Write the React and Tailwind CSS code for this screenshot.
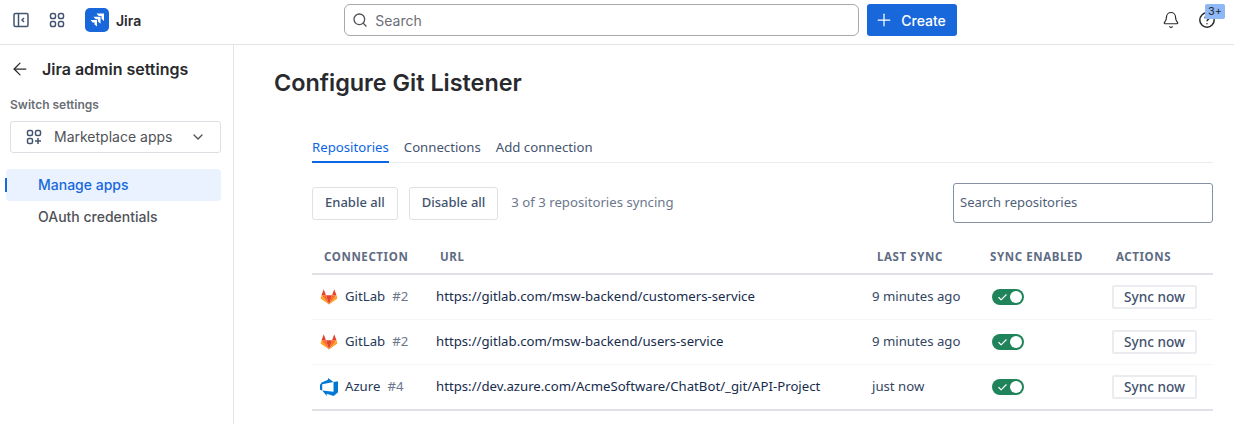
import { ArrowLeft, Bell, ChevronDown, Check, Plus, Search } from 'lucide-react';

const repos = [
  { kind: 'gitlab', name: 'GitLab', num: '#2', url: 'https://gitlab.com/msw-backend/customers-service', last: '9 minutes ago' },
  { kind: 'gitlab', name: 'GitLab', num: '#2', url: 'https://gitlab.com/msw-backend/users-service', last: '9 minutes ago' },
  { kind: 'azure', name: 'Azure', num: '#4', url: 'https://dev.azure.com/AcmeSoftware/ChatBot/_git/API-Project', last: 'just now' },
];

const GitLabIcon = () => (
  <svg width="18" height="18" viewBox="0 0 24 24">
    <polygon fill="#E24329" points="8,9.500 5,1.500 2,9.500" />
    <polygon fill="#E24329" points="16,9.500 19,1.500 22,9.500" />
    <polygon fill="#FC6D26" points="12,22 8,9.500 2,9.500" />
    <polygon fill="#FC6D26" points="12,22 16,9.500 22,9.500" />
    <polygon fill="#E24329" points="12,22 8,9.500 16,9.500" />
    <polygon fill="#FCA326" points="2,9.500 .8,14 12,22" />
    <polygon fill="#FCA326" points="22,9.500 23.200,14 12,22" />
  </svg>
);

const AzureIcon = () => (
  <svg width="18" height="18" viewBox="0 0 24 24">
    <path fill="#0078D4" d="M0 8.877 2.247 5.910l8.405-3.416V.022l7.370 5.393L2.966 8.338v8.225L0 15.707zm24-4.450v14.651l-5.753 4.900-9.303-3.057v3.056l-5.978-7.416 15.057 1.798V5.415z" />
  </svg>
);

const SidebarToggle = () => (
  <svg width="16" height="16" viewBox="0 0 16 16" fill="none" stroke="#44546f" strokeWidth="1.5">
    <rect x="1" y="1.500" width="14" height="13" rx="1.500" />
    <path d="M5.500 1.500v13M11 6 9 8l2 2" />
  </svg>
);

const AppsIcon = () => (
  <svg width="16" height="16" viewBox="0 0 16 16" fill="none" stroke="#44546f" strokeWidth="1.500">
    <rect x="1.500" y="1.500" width="5" height="5" rx="1.800" />
    <rect x="9.500" y="1.500" width="5" height="5" rx="1.800" />
    <rect x="1.500" y="9.500" width="5" height="5" rx="1.800" />
    <rect x="9.500" y="9.500" width="5" height="5" rx="1.800" />
  </svg>
);

const MarketplaceIcon = () => (
  <svg width="16" height="16" viewBox="0 0 16 16" fill="none" stroke="#44546f" strokeWidth="1.500">
    <rect x="1.500" y="1.500" width="5" height="5" rx="1.500" />
    <rect x="9.500" y="1.500" width="5" height="5" rx="1.500" />
    <rect x="1.500" y="9.500" width="5" height="5" rx="1.500" />
    <path d="M12 9v6M9 12h6" />
  </svg>
);

const JiraLogo = () => (
  <div className="w-6 h-6 rounded-[5px] bg-[#1868db] flex items-center justify-center">
    <svg width="16" height="16" viewBox="0 0 16 16" fill="white">
      <polygon points="7.500,1.500 15,1.500 15,9 12.500,6.800 12.500,4 9.700,4" />
      <polygon points="4.500,4.800 11.500,4.800 11.500,11.800 9,9.600 9,7.300 6.700,7.300" />
      <polygon points="1.500,8.100 8,8.100 8,14.600 5.500,12.400 5.500,10.600 3.700,10.600" />
    </svg>
  </div>
);

const HelpIcon = () => (
  <svg width="18" height="18" viewBox="0 0 18 18" fill="none" stroke="#292a2e" strokeWidth="1.500">
    <circle cx="9" cy="9" r="7.200" />
    <path d="M7 7.200c0-2.500 4-2.500 4 0 0 1.500-2 1.500-2 3" />
    <path d="M9 12.200v1" />
  </svg>
);

const Toggle = () => (
  <div className="w-8 h-4 rounded-full bg-[#1f845a] flex items-center justify-between pl-[5px] pr-[2px]">
    <Check size={11} color="white" strokeWidth={2.500} />
    <div className="w-3 h-3 rounded-full bg-white" />
  </div>
);

const rowGrid = 'grid grid-cols-[124px_436px_118px_122px_101px] items-center';

export default function App() {
  return (
    <div className="w-[1234px] h-[424px] overflow-hidden bg-white flex flex-col font-['Inter',sans-serif]">
      <header className="h-[45px] shrink-0 border-b border-[#e2e3e5] flex items-center pl-[13px] pr-[18px] pb-[4px]">
        <SidebarToggle />
        <div className="ml-[20px]"><AppsIcon /></div>
        <div className="ml-[20px]"><JiraLogo /></div>
        <span className="ml-[7px] text-[14px] font-semibold text-[#292a2e]">Jira</span>
        <div className="ml-[203px] w-[515px] h-[32px] rounded-[6px] border border-[#a8a9ad] flex items-center pl-[7px] gap-[7px]">
          <Search size={16} color="#505258" />
          <span className="text-[14px] text-[#6b6e76]">Search</span>
        </div>
        <button className="ml-[8px] w-[90px] h-[32px] rounded-[3px] bg-[#1868db] text-white text-[14px] font-medium flex items-center pl-[7px] gap-[7px]">
          <Plus size={20} strokeWidth={1.500} />
          Create
        </button>
        <div className="ml-auto flex items-center gap-[18px]">
          <Bell size={18} color="#292a2e" strokeWidth={1.600} />
          <div className="relative">
            <HelpIcon />
            <span className="absolute -top-[7px] -right-[9px] w-[20px] h-[15px] rounded-[2px] bg-[#8fb8f6] text-[#292a2e] text-[11px] leading-[14px] text-center">3+</span>
          </div>
        </div>
      </header>

      <div className="flex flex-1 min-h-0">
        <aside className="w-[234px] shrink-0 border-r border-[#e2e3e5] pl-[6px] pr-[12px]">
          <div className="flex items-center h-[48px] pl-[4px] gap-[12px]">
            <ArrowLeft size={20} color="#292a2e" strokeWidth={1.500} />
            <span className="text-[16px] leading-5 font-semibold text-[#292a2e]">Jira admin settings</span>
          </div>
          <div className="pl-[4px] mt-[4px] text-[12px] leading-4 font-semibold text-[#6b6e76]">Switch settings</div>
          <div className="ml-[4px] mt-[8px] h-[32px] rounded-[3px] border border-[#dcdfe4] flex items-center pl-[15px] pr-[14px] pb-[1px]">
            <MarketplaceIcon />
            <span className="ml-[12px] text-[14px] text-[#505258]">Marketplace apps</span>
            <ChevronDown size={16} color="#505258" className="ml-auto" />
          </div>
          <div className="relative mt-[16px] h-[32px] rounded-[4px] bg-[#e9f2fe] flex items-center pl-[32px] pb-[1px] text-[14px] font-medium text-[#1868db]">
            <span className="absolute -left-[1px] top-[9px] w-[2px] h-[14px] bg-[#1868db]" />
            Manage apps
          </div>
          <div className="h-[32px] flex items-center pl-[32px] pb-[1px] text-[14px] font-medium text-[#505258]">OAuth credentials</div>
        </aside>

        <main className="flex-1 min-w-0 pl-[40px] pr-[21px] font-['Noto_Sans',sans-serif]">
          <h1 className="mt-[22px] text-[23.4px] leading-[32px] font-semibold font-['Inter',sans-serif] text-[#292a2e]">Configure Git Listener</h1>

          <div className="ml-[38px] mt-[38px] h-[26px] border-b border-[#ebecf0] flex gap-[15px] text-[13.2px] leading-[21px] text-[#44546f]">
            <span className="h-[26px] border-b-2 border-[#0c66e4] text-[#0c66e4]">Repositories</span>
            <span>Connections</span>
            <span>Add connection</span>
          </div>

          <div className="ml-[38px] mt-[20px] h-[40px] flex items-center">
            <button className="h-[33px] px-[12px] rounded-[3px] border border-[#dfe1e6] text-[13px] font-medium text-[#42526e]">Enable all</button>
            <button className="ml-[11px] h-[33px] px-[12px] rounded-[3px] border border-[#dfe1e6] text-[13px] font-medium text-[#42526e]">Disable all</button>
            <span className="ml-[13px] text-[13.2px] text-[#6b778c]">3 of 3 repositories syncing</span>
            <div className="ml-auto w-[260px] h-[40px] rounded-[3px] border border-[#8590a2] flex items-center pl-[6px] text-[13px] text-[#505f79]">Search repositories</div>
          </div>

          <div className={`${rowGrid} ml-[38px] mt-[17px] h-[35px] border-b-2 border-[#dfe1e6] text-[11.5px] font-bold tracking-[0.6px] text-[#5e6c84]`}>
            <span className="pl-[12px]">CONNECTION</span>
            <span className="pl-[4px]">URL</span>
            <span className="pl-[5px]">LAST SYNC</span>
            <span>SYNC ENABLED</span>
            <span className="pl-[4px]">ACTIONS</span>
          </div>

          <div className="ml-[38px] border-b-2 border-[#dfe1e6]">
            {repos.map((r, i) => (
              <div key={i} className={`${rowGrid} ${i < 2 ? 'h-[45px] border-b border-[#f4f5f7]' : 'h-[44px]'} text-[13.2px] text-[#172b4d]`}>
                <div className="flex items-center pl-[8px]">
                  {r.kind === 'gitlab' ? <GitLabIcon /> : <AzureIcon />}
                  <span className="ml-[7px] text-[#253858]">{r.name}</span>
                  <span className="ml-[7px] text-[#6b778c]">{r.num}</span>
                </div>
                <span>{r.url}</span>
                <span className="text-[#344563]">{r.last}</span>
                <span className="pl-[2px]"><Toggle /></span>
                <button className="w-[85px] h-[24px] rounded-[2px] border-2 border-[#ebecf0] text-[13.6px] font-medium text-[#42526e] flex items-center justify-center">Sync now</button>
              </div>
            ))}
          </div>
        </main>
      </div>
    </div>
  );
}
